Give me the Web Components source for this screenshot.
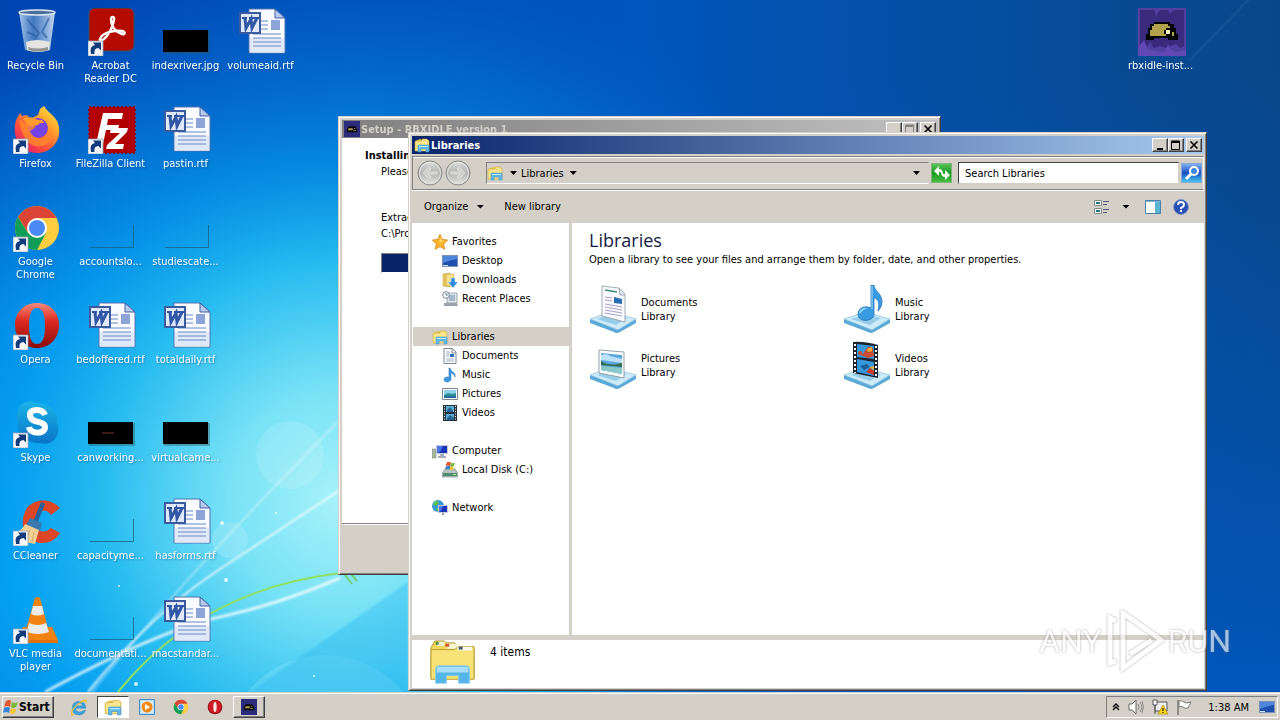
<!DOCTYPE html>
<html lang="en">
<head>
<meta charset="utf-8">
<title>Desktop</title>
<style>
  :root {
    --face: #d4d0c8;
    --ui: "DejaVu Sans Condensed", "DejaVu Sans", sans-serif;
  }
  html, body { height: 100%; margin: 0; }
  body { font: 11px/13px var(--ui); color: #000; overflow: hidden; }
</style>
</head>
<body>
<desk-shell></desk-shell>

<script>
// ---------- icons ----------
const arrow = `<path d="M0 33h15v15H0z" fill="#f4f6f9" stroke="#9aa5b5" stroke-width=".8"/><path d="M3 46q-2-8 4-9l-2-2.500h8v8l-2.500-2.500q-5 0-4 6z" fill="#123c7c"/>`;
const base = `<path d="M1 34L28 43l19-9v4L31 47q-3 2-6 0L1 38z" fill="#5aa9d6"/><path d="M1 34L22 27l25 7-18 11z" fill="#cdeaf8" stroke="#86c1e0" stroke-width=".7"/><path d="M8 34l15-5 15 4-11 7z" fill="#98cde9"/>`;
const libFront = `<path d="M1 4l5-2 2 1h7v11H1z" fill="#e9c44c"/><path d="M2 4h6V2h5l2 2v10H1V5z" fill="#f8e48b" stroke="#caa437" stroke-width=".6"/><path d="M4 15V9q0-1 1-1h9q1 0 1 1v6h-3v-3H7v3z" fill="#5cb8ea" stroke="#3c91c8" stroke-width=".5"/><path d="M5 9h9v1H5z" fill="#c6ecfb"/>`;
const helmet = `<path d="M0 0h24v24H0z" fill="#5140a0"/><path d="M1 1h7l1 3 2-3h4l1 2 2-2h5v18l-2 1-2-2-3 1-1-1-1 2-3-1-3 1-2-3-2 3-3-2z" fill="#392a7c"/><path d="M0 20l3-4 2 5 8 1 2-3 3 3 6-1v3H0z" fill="#6248b4"/><path d="M8 7h8v1h2v2h1v3h1v3h-5v-1H8v1H4v-3h1v-3h1V8h2z" fill="#000"/><path d="M8 8h7v1h1v1h-2v1h-1v2h1v1H6v-3h1V9h1z" fill="#b3a14c"/><path d="M14 11h2v2h-2z" fill="#f6edc4"/><path d="M17 12h1v2h-1z" fill="#b3a14c"/>`;
const chrome = `<circle cx="24" cy="24" r="22" fill="#ffcd40"/><path d="M5 13l10.500 16L24 14h19.600A22 22 0 0 0 5 13z" fill="#db4437"/><path d="M15 29L5 13a22 22 0 0 0 19 33l9-17z" fill="#0f9d58"/><circle cx="24" cy="24" r="10" fill="#fff"/><circle cx="24" cy="24" r="8" fill="#4a8af4"/>`;
const opera = `<defs><linearGradient id="op" x2="0" y2="1"><stop stop-color="#f88a7c"/><stop offset=".4" stop-color="#dc2a20"/><stop offset="1" stop-color="#8c0b08"/></linearGradient></defs><path fill-rule="evenodd" d="M24 1C11 1 2 10 2 23s9 23 22 23 22-10 22-23S37 1 24 1zm0 5c6 0 8 7 8 18s-2 18-8 18-8-7-8-18 2-18 8-18z" fill="url(#op)"/>`;
const note = `<path d="M8 1c1 4 6 4 5 9-1-3-3-4-4-4v6c0 2-2 3-4 3s-3-1-3-2.500 2-3 5-2.300V1z" fill="#3c9be0" stroke="#1e6cb4" stroke-width=".5"/>`;
const monitor = `<path d="M0 2h16v12H0z" fill="#7c92b4"/><path d="M1 3h14v10H1z" fill="#1f4fae"/><path d="M1 3h14v3Q8 7 1 10z" fill="#4d86dc"/><path d="M1 12h5v1H1z" fill="#cde4f8"/>`;
const pc = `<path d="M0 6h4v9H0z" fill="#a8b6a0" stroke="#708070" stroke-width=".5"/><path d="M4 2h12v9H4z" fill="#c5cbd8"/><path d="M5 3h10v7H5z" fill="#1733b8"/><path d="M5 3h6L8 9 5 10z" fill="#4c75ec"/><path d="M8 11h4v2h2v2H6v-2h2z" fill="#a6adba"/>`;
const flagLogo = `<path d="M3 2q4-2 5 0L7 8Q4 6 1 8z" fill="#e5562c"/><path d="M9 3q3 2 6 0l-2 5q-3 2-5 0z" fill="#76b83c"/><path d="M1 9q3-2 6 0l-1 5q-3-2-6 0z" fill="#3685d8"/><path d="M8 9q3 2 5 1l-1 4q-3 2-5 0z" fill="#f8c42c"/>`;

const ICONS = {
  bin: [48, `<defs><linearGradient id="b"><stop stop-color="#d3e5f4" stop-opacity=".8"/><stop offset=".4" stop-color="#6d9cd0" stop-opacity=".6"/><stop offset="1" stop-color="#dbe8f4" stop-opacity=".9"/></linearGradient></defs><path d="M6 4h36l-5 38q-13 4-25 0z" fill="url(#b)"/><path d="M13 34q11-4 24 0l-1 8q-11 4-22 0z" fill="#e4e4e0"/><path d="M15 39q9 3 20 0v3q-10 3-19 0z" fill="#92928f"/><ellipse cx="24" cy="4.500" rx="18" ry="2.500" fill="#496f9f" stroke="#dde6ee" stroke-width="1.500"/><path d="M14 11l12 14-4 6M36 10l-7 14 5 6M14 24l9 4" stroke="#2a5c9a" stroke-width="2" fill="none" opacity=".6"/>`],
  acrobat: [48, `<rect x="1" width="45" height="43" rx="6" fill="#b30b00" stroke="#35506e" stroke-width="1"/><path d="M12 31c2-6 12-9 22-8 4 1 3 4 0 3-7-2-11-8-11-15 0-3 4-3 3 1-1 7-6 16-10 19-3 2-5 2-4 0z" fill="none" stroke="#fff" stroke-width="2.400"/>` + arrow],
  firefox: [48, `<defs><linearGradient id="f" x1="1" x2=".2" y2="1"><stop stop-color="#fff44f"/><stop offset=".35" stop-color="#ffa72a"/><stop offset=".7" stop-color="#ff4f3c"/><stop offset="1" stop-color="#e01870"/></linearGradient></defs><path d="M3 14l4-7 2 3 5-1 3 4 8-4 2-6 4-3c4 7 9 8 13 15 7 15-3 32-20 32C7 47-2 31 3 14z" fill="url(#f)"/><circle cx="25" cy="22" r="10" fill="#7542e5"/><path d="M6 14q9 6 17 2 1 6-6 9 3 8 11 7 10-1 9-13 6 15-7 21-19 4-24-26z" fill="#ff8a2c" opacity=".8"/><path d="M10 13q8-4 15 1 5-1 6 3-4-1-6 2l-8 1z" fill="#ff9c2c"/>` + arrow],
  filezilla: [48, `<path d="M1 1h46v46H1z" fill="#b20000" stroke="#8c0c16" stroke-width="2" stroke-dasharray="2 2"/><path d="M15 7h20l-1 6H20l-1 6h12l-1 5H18l-3 14H8z" fill="#fff"/><path d="M23 22h17l-1 4-12 12h9l-1 5H18l1-4 13-12H22z" fill="#fff"/>` + arrow],
  chrome: [48, chrome + arrow],
  opera: [48, opera + arrow],
  skype: [48, `<defs><linearGradient id="s" x2="0" y2="1"><stop stop-color="#1ab4e8"/><stop offset="1" stop-color="#0a74c8"/></linearGradient></defs><path d="M14 2c4-2 8 0 10 1 14 0 21 9 20 20 5 12-5 24-17 20C12 43 3 34 5 23 1 13 6 3 14 2z" fill="url(#s)"/><path d="M32 15q-2-5-8-5-7 0-7 5c0 9 15 5 15 12 0 8-15 7-16 0" fill="none" stroke="#fff" stroke-width="6"/>` + arrow],
  ccleaner: [48, `<path d="M47 10C38 0 22 0 14 10 5 24 11 43 27 45q13 1 20-10l-9-5q-6 6-12 2c-7-5-5-15 2-19q6-2 10 4z" fill="#dc4526"/><path d="M28 4l4 2-8 20-4-2z" fill="#26639c"/><path d="M17 20l12 5-2 8-14-6z" fill="#3a78ae"/><path d="M12 26l14 6-4 14-21-4 1-8q7-1 10-8z" fill="#f3cf93"/><path d="M17 32l-4 10M21 34l-2 10" stroke="#d7a868"/>` + arrow],
  vlc: [48, `<path d="M10 31h29l6 13H6z" fill="#f08214"/><path d="M6 44h39v3H6z" fill="#e0700a"/><path d="M22 2q2-2 5 0l10 38q-13 7-26 0z" fill="#f38310"/><path d="M20 10h9l2 8q-7 3-13 0zM16 27q9 4 17 0l3 9q-11 4-22 0z" fill="#ececec"/>` + arrow],
  word: [48, `<path d="M11 1h26l10 9v35H11z" fill="#f8fbff" stroke="#5273af"/><path d="M12 30h34v15H12z" fill="#d5e1f6" opacity=".7"/><path d="M37 1v9h10z" fill="#b8cbed" stroke="#3c5fa4"/><path d="M15 13h15M15 17h15M15 21h15M15 26h28M15 30h28M15 34h28M15 38h28" stroke="#6c88c4"/><path d="M33 12h9v10h-9z" fill="#8ca4d8"/><path d="M2 5h20v20H2z" fill="#dfe9fa" stroke="#3b5ba0" stroke-width="2"/><path d="M4 10h5M11 10h5M16 10h5" stroke="#3056a4" stroke-width="2"/><path d="M7 10l1 10 5-9 1 9 5-10" fill="none" stroke="#3056a4" stroke-width="3"/>`],
  black: [48, `<path d="M1 23h46v23H1z" fill="#355" opacity=".4"/><path d="M0 22h45v22H0z"/>`],
  blackline: [48, `<path d="M1 23h46v23H1z" fill="#355" opacity=".4"/><path d="M0 22h45v22H0z"/><path d="M14 33h12" stroke="#753b2c"/>`],
  ghost: [48, `<path d="M45.500 21v22.500H2" fill="none" stroke="#185f80" stroke-opacity=".75"/>`],
  rbx: [24, helmet],
  app: [24, `<path d="M0 0h24v24H0z" fill="#2d2c7c"/><path d="M7 8h10l3 5v4H4v-4z" fill="#080808"/><path d="M7 11h6v3H6zM15 11h2v1h-2zM14 14h4v1h-4z" fill="#b3a14c"/>`],
  lib: [16, libFront],
  libbig: [48, `<path d="M3 3h17v4H3z" fill="#d4b63c"/><path d="M5 1h10l2 2h9l3 4h16l1 3v30H1V8z" fill="#efd75d" stroke="#b99b32"/><path d="M7 2h8v4H7z" fill="#eff1df"/><path d="M6 2h3v3H6z" fill="#4a8c3b"/><path d="M17 4h12l3 5H18z" fill="#fff6d4"/><path d="M16 4h4v3h-4z" fill="#d65334"/><path d="M1 10h25l3-3h17v34H1z" fill="#f6e277" stroke="#b99b32"/><path d="M29 7h15v4H29z" fill="#f9faf0"/><path d="M30 7h4v3h-4z" fill="#456"/><path d="M6 45V30q0-3 3-3h29q3 0 3 3v15H30v-8H17v8z" fill="#54b5e8" stroke="#7cc6ee"/><path d="M7 28h33v6H7z" fill="#bce7f8" opacity=".8"/>`],
  star: [16, `<path d="M8 .500l2.300 4.900 5.400.7-4 3.700 1 5.500L8 12.600l-4.700 2.700 1-5.500-4-3.700 5.400-.7z" fill="#fbb62c" stroke="#d98413" stroke-width=".8"/><path d="M8 3l1.400 3.500 3 .5-5 1z" fill="#ffe37e"/>`],
  desktop: [16, monitor],
  downloads: [16, `<path d="M1 2l7-1v14l-7-1z" fill="#e9c65a" stroke="#c09a34" stroke-width=".5"/><path d="M4 2h8v12H4z" fill="#f6df8c" stroke="#c09a34" stroke-width=".5"/><path d="M9 6h4v4h3l-5 6-5-6h3z" fill="#2d8ae0" stroke="#cfe6f9" stroke-width=".6"/>`],
  recent: [16, `<path d="M5 2h10v10H5z" fill="#dfe4ea" stroke="#7f8c99" stroke-width=".7"/><path d="M7 5h6M7 7h6M7 9h6" stroke="#688bb0"/><path d="M2 12h13l1 3H2z" fill="#9aa3ad"/><circle cx="4" cy="4" r="3.300" fill="#f4f7fa" stroke="#7f8c99"/><path d="M4 2v2h2" fill="none" stroke="#456" stroke-width=".7"/>`],
  doc: [16, `<path d="M2 .500h8.500L14 4v11.500H2z" fill="#fbfcfe" stroke="#7c8797"/><path d="M10 1v4h4" fill="none" stroke="#7c8797"/><path d="M4 4h4M4 6h4M4 8h3M4 11h8M4 13h8" stroke="#8fa1b8" stroke-width=".8"/><path d="M8 6h4v3H8z" fill="#2d70b8"/>`],
  note: [16, note],
  pic: [16, `<path d="M.500 2.500h15v11H.500z" fill="#fff" stroke="#7d8792"/><path d="M2 4h12v8H2z" fill="#8ad0ea"/><path d="M2 9l4-2 4 1 4-1v5H2z" fill="#2d8f8f"/><path d="M2 10h12v2H2z" fill="#226aa0"/>`],
  film: [16, `<path d="M1 0h14v16H1z" fill="#22303c"/><path d="M4 1h8v6H4zM4 9h8v6H4z" fill="#5caed8"/><path d="M5 5l3-3 3 4v1H5zM5 13l3-3 4 3v2H5z" fill="#266494"/><path d="M2.500 1v15M13.500 1v15" stroke="#fff" stroke-dasharray="1 1.500"/>`],
  computer: [16, pc],
  disk: [16, `<g transform="translate(3 -1) scale(.65)">${flagLogo}</g><path d="M3 7h10l3 4v4H0v-4z" fill="#b9c3c0" stroke="#758280" stroke-width=".6"/><path d="M1 11h14v3H1z" fill="#4f8c6e"/><path d="M11 12h3v1h-3z" fill="#aef09c"/><g transform="translate(4 -1) scale(.6)">${flagLogo}</g>`],
  network: [16, `<circle cx="6" cy="6" r="6" fill="#3498d8"/><path d="M2 2q4-3 5 1L4 6 1 5zM3 8l4 1-1 3z" fill="#5fc05e"/><path d="M6 5h10v8H6z" fill="#c5cbd8"/><path d="M7 6h8v6H7z" fill="#1733b8"/><path d="M7 6h4l-2 5-2 1z" fill="#4c75ec"/><path d="M10 13h2v2h-2z" fill="#89a"/>`],
  libdoc: [48, base + `<path d="M13 1l17 2 6 6v28L13 31z" fill="#f9fafc" stroke="#8c98a6" stroke-width=".8"/><path d="M30 3l1 7h5" fill="#dde6ee" stroke="#8c98a6" stroke-width=".8"/><path d="M16 5l12 2" stroke="#3f8a78" stroke-width="1.500"/><path d="M16 12l7 1M16 15l7 1M16 19l17 3M16 22l17 3M16 25l17 3M16 28l17 3" stroke="#a8a0c8"/><path d="M25 12l8 2v5l-8-1z" fill="#276fb0"/>`],
  libmusic: [48, base + `<path d="M28 0h3c0 6 8 8 8 17q0 5-4 9c2-9 0-12-4-13v16c0 8-16 9-16 0 0-6 7-9 13-6z" fill="#3a9be2" stroke="#2473b7" stroke-width=".8"/><path d="M16 27q3-5 9-4-5 1-8 6z" fill="#92d4f8"/><path d="M29 1v23" stroke="#a6dcf7"/>`],
  libpic: [48, base + `<path d="M10 9l25 2v26L10 32z" fill="#fcfdfe" stroke="#93a0ac"/><path d="M12 12l21 2v19l-21-4z" fill="#5aa8df"/><path d="M12 14q7-2 9 1l12 3v4l-21-3z" fill="#bde2f8"/><path d="M12 20q8 6 21 2v4l-21-2z" fill="#376b4b"/><path d="M12 25l21 2v6l-21-4z" fill="#89c9ca"/>`],
  libvideo: [48, base + `<path d="M10 1q10-1 25 3v33L10 32z" fill="#1c2430"/><path d="M14 3l17 2v13l-17-2zM14 18l17 3v14l-17-4z" fill="#3898dc"/><path d="M15 13q0-3 3-3l2 3 4-6q4-3 6 1l1 7-6 2z" fill="#c94c33"/><path d="M23 31l4-4 4 3v4z" fill="#cf3926"/><path d="M24 8l5-2v4l-4 1zM26 26l5-1v4z" fill="#e8b534"/><path d="M17 25l7-2 3 3-6 3z" fill="#1c5f9b"/><path d="M12 3v29M33 5v31" stroke="#fff" stroke-width="2" stroke-dasharray="2 2"/>`],
  back: [26, `<defs><linearGradient id="n" x2="0" y2="1"><stop stop-color="#deded c"/><stop stop-color="#dededc"/><stop offset=".5" stop-color="#b4b4b2"/><stop offset="1" stop-color="#e4e4e2"/></linearGradient></defs><circle cx="13" cy="13" r="12" fill="url(#n)" stroke="#888"/><circle cx="13" cy="13" r="10.500" fill="none" stroke="#e4e4e2"/><path d="M6 13l6-6 2 2-3 3h9v2h-9l3 3-2 2z" fill="#d0d0ce" stroke="#dcdcda"/>`],
  go: [16, `<path d="M0 6l5-5v3q4 0 4 5Q8 7 5 7v4zM16 10l-5 5v-3q-4 0-4-5 1 2 4 2V5z" fill="#f4fff0"/>`],
  lens: [16, `<circle cx="10" cy="6" r="4" fill="#3f86dc" stroke="#fff" stroke-width="2"/><path d="M7 9l-5 5" stroke="#fff" stroke-width="3"/>`],
  view: [16, `<path d="M.500 1.500h7v5h-7zM.500 9.500h7v5h-7z" fill="#fff" stroke="#7f8b86"/><path d="M2 4h4M2 12h4" stroke="#287078" stroke-width="2"/><path d="M9 2.500h6M9 5.500h4M9 10.500h6M9 13.500h4" stroke="#557"/>`],
  pane: [16, `<path d="M.500 1.500h15v13H.500z" fill="#fff" stroke="#4b80a8"/><path d="M10 3h5v11h-5z" fill="#59b7d3"/><path d="M1 2h14v1H1z" fill="#83b5d8"/>`],
  help: [16, `<circle cx="8" cy="8" r="7.500" fill="#2850b4" stroke="#8b9dc8"/><path d="M5 6q0-3 3-3t3 3q0 1.500-3 3v1" fill="none" stroke="#fff" stroke-width="2"/><path d="M7 11h2v2H7z" fill="#fff"/>`],
  win: [16, flagLogo],
  ie: [16, `<path d="M14 9H5q0 3 3 3.500 3 0 4-1.500h2q-2 4-6 4-6 0-6-6t6-6q6 0 6 6zM5 7h6q0-2.500-3-2.500T5 7z" fill="#3aa4e4" stroke="#2379b8" stroke-width=".4"/><path d="M1 15q-1-5 6-10 6-5 8-3 1 1-1 3 1-2-1-2-3 0-7 4-5 5-4 7 1 1 3 0-3 3-4 1z" fill="#f0c030"/>`],
  wmp: [16, `<path d="M.500.500h15v15H.500z" fill="#b9dcf3" stroke="#438cc6"/><path d="M2 2h12v12H2z" fill="#d9eefb"/><circle cx="8" cy="8" r="5.500" fill="#f38b14"/><path d="M6 5l5 3-5 3z" fill="#fff"/>`],
  chromesm: [48, chrome],
  operasm: [48, `<circle cx="24" cy="24" r="22" fill="#9c0f18"/><circle cx="24" cy="23" r="19" fill="#cf1c26"/><ellipse cx="24" cy="24" rx="5" ry="15" fill="#f6e8e6"/>`],
  chev: [8, `<path d="M1 4l3-3 3 3M1 7l3-3 3 3" fill="none" stroke="#000" stroke-width="1.300"/>`],
  sound: [16, `<path d="M1 5h3l4-4v14l-4-4H1z" fill="#fff" stroke="#666"/><path d="M10 5q2 3 0 6M12 3q3.500 5 0 10M14 2q3 6 0 12" fill="none" stroke="#888"/>`],
  net: [16, `<path d="M3 3h12v9H3z" fill="#eee" stroke="#555"/><path d="M1 1h4v5H1zM3 6v9" fill="#fff" stroke="#555"/><path d="M11 6l5 9H6z" fill="#fbd51c" stroke="#aa8300" stroke-width=".6"/><path d="M11 9v3M11 13v1" stroke="#000"/>`],
  flag: [16, `<path d="M2 1v15" stroke="#777" stroke-width="1.500"/><path d="M3 2q3-1 5 1 2 2 7 0-2 4-3 6-3 1-5-1-2-1-4 0z" fill="#fff" stroke="#777"/>`]
};

class PixIcon extends HTMLElement {
  static get observedAttributes() { return ['name', 'size']; }
  constructor() { super(); this.attachShadow({ mode: 'open' }); }
  connectedCallback() { this.render(); }
  attributeChangedCallback() { this.render(); }
  render() {
    const [box, body] = ICONS[this.getAttribute('name')] || [16, ''];
    const size = this.getAttribute('size') || 16;
    this.shadowRoot.innerHTML = `
      <style>:host { display: block; flex: none; line-height: 0; }</style>
      <svg width="${size}" height="${size}" viewBox="0 0 ${box} ${box}" aria-hidden="true">${body}</svg>`;
  }
}

// small helper: class with a fixed shadow markup
function define(tag, html) {
  customElements.define(tag, class extends HTMLElement {
    constructor() { super(); this.attachShadow({ mode: 'open' }); }
    connectedCallback() {
      this.shadowRoot.innerHTML = typeof html === 'function' ? html(this) : html;
    }
  });
}
customElements.define('pix-icon', PixIcon);

// ---------- desktop ----------
define('desk-wallpaper', `
  <style>
    :host { display: block; position: absolute; inset: 0; }
    svg { display: block; width: 100%; height: 100%; }
  </style>
  <svg viewBox="0 0 1280 692" preserveAspectRatio="xMidYMid slice" aria-hidden="true">
    <defs>
      <linearGradient id="sky" x2="1" y2="0">
        <stop stop-color="#0044b0"/><stop offset=".5" stop-color="#0056bc"/><stop offset="1" stop-color="#0a4788"/>
      </linearGradient>
      <linearGradient id="low" x2="0" y2="1">
        <stop offset=".1" stop-color="#0054b8" stop-opacity="0"/><stop offset="1" stop-color="#0058c0" stop-opacity=".9"/>
      </linearGradient>
      <radialGradient id="left" gradientUnits="userSpaceOnUse" cx="0" cy="600" r="560">
        <stop stop-color="#00a4fa"/><stop offset=".5" stop-color="#0092f0" stop-opacity=".9"/><stop offset="1" stop-color="#0070d8" stop-opacity="0"/>
      </radialGradient>
      <radialGradient id="glow" gradientUnits="userSpaceOnUse" cx="340" cy="500" r="560">
        <stop stop-color="#a8f2fa"/><stop offset=".2" stop-color="#78e2f6"/><stop offset=".42" stop-color="#28bcf0"/>
        <stop offset=".6" stop-color="#06a0f0" stop-opacity=".7"/><stop offset=".85" stop-color="#0470d4" stop-opacity=".4"/><stop offset="1" stop-color="#0458c0" stop-opacity="0"/>
      </radialGradient>
      <filter id="soft"><feGaussianBlur stdDeviation="1"/></filter>
    </defs>
    <path d="M0 0h1280v692H0z" fill="url(#sky)"/>
    <path d="M0 0h1280v692H0z" fill="url(#low)"/>
    <path d="M0 0h1280v692H0z" fill="url(#left)"/>
    <path d="M0 0h1280v692H0z" fill="url(#glow)"/>
    <circle cx="325" cy="755" r="100" fill="#a0ecfc" opacity=".25"/>
    <circle cx="290" cy="455" r="34" fill="#fff" opacity=".12"/>
    <circle cx="230" cy="540" r="18" fill="#fff" opacity=".15"/>
    <path d="M250 692h158v-110z" fill="#20b4f0" opacity=".35" filter="url(#soft)"/>
    <g fill="none" stroke="#fff" filter="url(#soft)">
      <path d="M45 692Q160 630 220 617T340 578" stroke-width="3" opacity=".75"/>
      <path d="M88 692Q150 615 220 569T340 490" stroke-width="2" opacity=".8"/>
      <path d="M92 692Q190 570 340 420" stroke-width="2" opacity=".35"/>
      <path d="M1190 60L1250 -2" stroke="#6c98cc" opacity=".5"/>
    </g>
    <path d="M118 692Q200 590 340 573" fill="none" stroke="#8ee060" stroke-width="2"/>
    <path d="M345 575l7 9M351 574l6 7" stroke="#70d070" stroke-width="2"/>
    <g fill="#fff" opacity=".8">
      <circle cx="222" cy="523" r="2"/><circle cx="276" cy="513" r="1"/><circle cx="226" cy="580" r="2"/>
      <circle cx="136" cy="684" r="2"/><circle cx="119" cy="586" r="1"/><circle cx="314" cy="676" r="1"/>
    </g>
  </svg>`);

define('desk-icon', el => `
  <style>
    :host { display: block; min-width: 0; }
    button { all: unset; display: flex; flex-direction: column; align-items: center; gap: 3px; width: 100%; text-align: center; white-space: nowrap; color: #fff; text-shadow: 1px 1px 2px #0a3a7080; }
    pix-icon { margin-left: 2px; }
  </style>
  <button><pix-icon name="${el.getAttribute('icon')}" size="48"></pix-icon><span><slot></slot></span></button>`);

// ---------- windows ----------
define('caption-buttons', `
  <style>
    :host { display: flex; margin-left: auto; }
    button { box-sizing: border-box; width: 16px; height: 14px; padding: 0; background: var(--face); border: 1px solid; border-color: #fff #404040 #404040 #fff; box-shadow: inset -1px -1px #808080; }
    button:last-child { margin-left: 2px; }
    svg { display: block; margin: auto; }
  </style>
  <button aria-label="Minimize"><svg width="12" height="11"><path d="M3 8h6v2H3z"/></svg></button>
  <button aria-label="Maximize"><svg width="12" height="11"><path d="M1.500 1v8.500h8V1z" fill="none" stroke="var(--max, #000)"/><path d="M1 1h9v2H1z" fill="var(--max, #000)"/></svg></button>
  <button aria-label="Close"><svg width="12" height="11"><path d="M2.500 1.500l7 7m0-7l-7 7" stroke="#000" stroke-width="1.600"/></svg></button>`);

define('desk-window', el => `
  <style>
    :host { display: flex; flex-direction: column; box-sizing: border-box; padding: 3px 2px 2px 3px; background: var(--face); border: 1px solid; border-color: var(--face) #404040 #404040 var(--face); box-shadow: inset 1px 1px #fff, inset -1px -1px #808080; }
    header { display: flex; align-items: center; gap: 1px; box-sizing: border-box; flex: none; height: 18px; padding: 0 2px; color: #fff; background: linear-gradient(90deg, #0a246a, #a6caf0); }
    :host([inactive]) header { --max: #808080; color: #d4d0c8; background: linear-gradient(90deg, #808080, #c0c0c0); }
    h1 { margin: 0; font-size: 11px; line-height: 13px; font-weight: bold; }
    main { display: flex; flex-direction: column; flex: 1; min-height: 0; }
  </style>
  <header><pix-icon name="${el.getAttribute('icon')}" size="16"></pix-icon><h1>${el.getAttribute('caption')}</h1><caption-buttons></caption-buttons></header>
  <main><slot></slot></main>`);

define('setup-page', `
  <style>
    :host { display: flex; flex-direction: column; flex: 1; }
    section { flex: 1; padding: 11px 39px 0; background: #fff; }
    h2 { margin: 0 0 3px -16px; font-size: 11px; line-height: 13px; }
    p { margin: 0 0 3px; line-height: 13px; }
    p.file { margin-top: 33px; }
    .bar { height: 18px; margin-top: 13px; border: 1px solid; border-color: #808080 #fff #fff #808080; background: linear-gradient(90deg, #0a246a 40%, #fff 40%); }
    footer { height: 48px; border-top: 1px solid #808080; box-shadow: inset 0 1px #fff; }
  </style>
  <section>
    <h2>Installing</h2>
    <p>Please wait</p>
    <p class="file">Extracting files...</p>
    <p>C:\\Program Files</p>
    <div class="bar" role="progressbar" aria-label="Install progress"></div>
  </section>
  <footer></footer>`);

define('address-bar', `
  <style>
    :host { display: flex; align-items: center; gap: 2px; box-sizing: border-box; height: 34px; margin-top: 2px; padding: 0 1px 0 4px; border: 1px solid; border-color: #808080 #fff #808080 #808080; box-shadow: inset 0 1px #fff, 0 1px #fff; }
    button { all: unset; box-sizing: border-box; flex: none; }
    .flip { transform: scaleX(-1); }
    .crumbs { display: flex; align-items: center; flex: 1; box-sizing: border-box; height: 22px; margin-left: 13px; padding: 0 8px 0 0; border: 1px solid; border-color: #808080 var(--face) #fff #808080; }
    .crumbs a { color: #000; text-decoration: none; margin: 0 6px 0 4px; }
    .tri { width: 7px; height: 4px; background: #000; clip-path: polygon(0 0, 100% 0, 50% 100%); }
    .first { margin-left: 7px; }
    .last { margin-left: auto; }
    .go, .find { display: grid; place-items: center; width: 21px; height: 20px; border: 1px solid #7fb47c; background: linear-gradient(#58c458, #159a22 50%, #46bd40); }
    .find { border-color: #88a8dc; background: linear-gradient(#7db0f0, #174fc4 50%, #48c4f0); }
    input { box-sizing: border-box; width: 221px; height: 22px; margin: 0 0 0 4px; padding: 0 6px; font: inherit; color: #000; background: #fff; border: 1px solid; border-color: #404040 #d4d0c8 #d4d0c8 #404040; border-radius: 0; }
    input::placeholder { color: #000; opacity: 1; }
  </style>
  <button aria-label="Back"><pix-icon name="back" size="26"></pix-icon></button>
  <button aria-label="Forward" class="flip"><pix-icon name="back" size="26"></pix-icon></button>
  <div class="crumbs">
    <pix-icon name="lib"></pix-icon>
    <i class="tri first"></i><a href="#">Libraries</a><i class="tri"></i>
    <button class="tri last" aria-label="Previous locations"></button>
  </div>
  <button class="go" aria-label="Refresh"><pix-icon name="go"></pix-icon></button>
  <input type="search" aria-label="Search Libraries" placeholder="Search Libraries">
  <button class="find" aria-label="Search"><pix-icon name="lens"></pix-icon></button>`);

define('command-bar', `
  <style>
    :host { display: flex; align-items: center; flex: none; height: 33px; padding: 0 15px 0 12px; }
    button { all: unset; display: flex; align-items: center; gap: 8px; margin-right: 20px; }
    button.icon { margin: 0 0 0 12px; }
    button.push { margin-left: auto; }
    button.wide { margin-left: 15px; }
    i { width: 8px; height: 4px; background: #000; clip-path: polygon(0 0, 100% 0, 50% 100%); }
  </style>
  <button>Organize<i></i></button>
  <button>New library</button>
  <button class="icon push" aria-label="Change your view"><pix-icon name="view"></pix-icon></button>
  <button class="icon" aria-label="More options"><i></i></button>
  <button class="icon wide" aria-label="Preview pane"><pix-icon name="pane"></pix-icon></button>
  <button class="icon" aria-label="Help"><pix-icon name="help"></pix-icon></button>`);

define('nav-item', el => `
  <style>
    :host { display: block; }
    a { display: flex; align-items: center; gap: 4px; height: 19px; padding-left: 19px; color: #000; text-decoration: none; }
    :host([sub]) a { padding-left: 29px; }
    :host([selected]) a { background: var(--face); }
  </style>
  <a href="#"><pix-icon name="${el.getAttribute('icon')}"></pix-icon><slot></slot></a>`);

define('library-tile', el => `
  <style>
    :host { display: block; }
    a { display: flex; align-items: center; gap: 4px; height: 48px; line-height: 14px; color: #000; text-decoration: none; }
    span { display: block; margin-top: 2px; }
  </style>
  <a href="#"><pix-icon name="${el.getAttribute('icon')}" size="48"></pix-icon><span><slot></slot><br>Library</span></a>`);

define('libraries-page', `
  <style>
    :host { display: flex; flex-direction: column; flex: 1; min-height: 0; }
    .body { display: flex; flex: 1; min-height: 0; background: #fff; }
    nav { box-sizing: border-box; width: 160px; padding: 9px 0 0 1px; border-right: 3px solid var(--face); }
    nav div { margin-bottom: 19px; }
    section { flex: 1; padding: 6px 17px; }
    h2 { margin: 0; font: 18px/22px "Open Sans", "Noto Sans", sans-serif; font-weight: 400; color: #111c44; }
    p { margin: 2px 0 18px; line-height: 14px; }
    .tiles { display: grid; grid-template-columns: repeat(auto-fill, 254px); row-gap: 8px; }
    footer { display: flex; gap: 14px; flex: none; height: 48px; padding-left: 18px; border-top: 5px solid var(--face); background: #fff; font-size: 12px; line-height: 24px; }
  </style>
  <address-bar></address-bar>
  <command-bar></command-bar>
  <div class="body">
    <nav aria-label="Places">
      <div>
        <nav-item icon="star">Favorites</nav-item>
        <nav-item icon="desktop" sub>Desktop</nav-item>
        <nav-item icon="downloads" sub>Downloads</nav-item>
        <nav-item icon="recent" sub>Recent Places</nav-item>
      </div>
      <div>
        <nav-item icon="lib" selected>Libraries</nav-item>
        <nav-item icon="doc" sub>Documents</nav-item>
        <nav-item icon="note" sub>Music</nav-item>
        <nav-item icon="pic" sub>Pictures</nav-item>
        <nav-item icon="film" sub>Videos</nav-item>
      </div>
      <div>
        <nav-item icon="computer">Computer</nav-item>
        <nav-item icon="disk" sub>Local Disk (C:)</nav-item>
      </div>
      <nav-item icon="network">Network</nav-item>
    </nav>
    <section>
      <h2>Libraries</h2>
      <p>Open a library to see your files and arrange them by folder, date, and other properties.</p>
      <div class="tiles">
        <library-tile icon="libdoc">Documents</library-tile>
        <library-tile icon="libmusic">Music</library-tile>
        <library-tile icon="libpic">Pictures</library-tile>
        <library-tile icon="libvideo">Videos</library-tile>
      </div>
    </section>
  </div>
  <footer><pix-icon name="libbig" size="46"></pix-icon>4 items</footer>`);

// ---------- taskbar ----------
define('task-bar', `
  <style>
    :host { display: flex; align-items: center; flex: none; box-sizing: border-box; height: 28px; padding: 3px 2px 1px; background: var(--face); box-shadow: inset 0 1px var(--face), inset 0 2px #fff; }
    button { all: unset; display: grid; place-items: center; box-sizing: border-box; width: 32px; height: 22px; margin-right: 2px; border: 1px solid transparent; }
    .up, .start { border-color: #fff #404040 #404040 #fff; box-shadow: inset -1px -1px #808080; }
    .down { border-color: #404040 #fff #fff #404040; background: #fff; }
    .start { display: flex; align-items: center; width: 52px; margin-right: 9px; font-size: 12px; font-weight: bold; }
    .tray { display: flex; align-items: center; gap: 8px; box-sizing: border-box; height: 22px; margin-left: auto; padding: 0 2px 0 5px; border: 1px solid; border-color: #808080 #fff #fff #808080; }
    time { margin: 0 2px 0 8px; }
  </style>
  <button class="start"><pix-icon name="win"></pix-icon>Start</button>
  <button aria-label="Internet Explorer"><pix-icon name="ie" size="18"></pix-icon></button>
  <button class="down" aria-label="Libraries"><pix-icon name="lib" size="18"></pix-icon></button>
  <button aria-label="Media Player"><pix-icon name="wmp"></pix-icon></button>
  <button aria-label="Google Chrome"><pix-icon name="chromesm"></pix-icon></button>
  <button aria-label="Opera"><pix-icon name="operasm"></pix-icon></button>
  <button class="up" aria-label="Setup"><pix-icon name="app"></pix-icon></button>
  <div class="tray">
    <pix-icon name="chev" size="8"></pix-icon>
    <pix-icon name="sound"></pix-icon>
    <pix-icon name="net"></pix-icon>
    <pix-icon name="flag"></pix-icon>
    <time>1:38 AM</time>
    <pix-icon name="desktop"></pix-icon>
  </div>`);

define('run-mark', `
  <style>
    :host { display: flex; align-items: center; gap: 4px; font: 32px/60px Roboto, sans-serif; color: #fff; opacity: .65; filter: drop-shadow(0 0 1px #777); pointer-events: none; }
  </style>
  <span>ANY</span>
  <svg width="58" height="62" fill="none" stroke="#fff" stroke-width="5" aria-hidden="true"><path d="M17 3l38 27-38 28zM10 11L4 8v45l6-2M17 14v32M24 44l22-14"/></svg>
  <span>RUN</span>`);

define('desk-shell', `
  <style>
    :host { display: flex; flex-direction: column; height: 100vh; }
    .desk { position: relative; flex: 1; min-height: 0; overflow: hidden; }
    .icons { position: relative; display: flex; justify-content: space-between; padding-top: 8px; }
    .grid { display: grid; grid-auto-flow: column; grid-template-rows: repeat(7, 98px); grid-auto-columns: 75px; margin-left: -2px; }
    .lone { width: 75px; margin-right: 82px; }
    desk-window { position: absolute; }
    .setup { left: 338px; top: 116px; width: 603px; height: 459px; }
    .explorer { left: 408px; top: 132px; width: 799px; height: 559px; }
    run-mark { position: absolute; right: 49px; bottom: 20px; }
  </style>
  <div class="desk">
    <desk-wallpaper></desk-wallpaper>
    <div class="icons">
      <div class="grid">
        <desk-icon icon="bin">Recycle Bin</desk-icon>
        <desk-icon icon="firefox">Firefox</desk-icon>
        <desk-icon icon="chrome">Google<br>Chrome</desk-icon>
        <desk-icon icon="opera">Opera</desk-icon>
        <desk-icon icon="skype">Skype</desk-icon>
        <desk-icon icon="ccleaner">CCleaner</desk-icon>
        <desk-icon icon="vlc">VLC media<br>player</desk-icon>
        <desk-icon icon="acrobat">Acrobat<br>Reader DC</desk-icon>
        <desk-icon icon="filezilla">FileZilla Client</desk-icon>
        <desk-icon icon="ghost">accountslo...</desk-icon>
        <desk-icon icon="word">bedoffered.rtf</desk-icon>
        <desk-icon icon="blackline">canworking...</desk-icon>
        <desk-icon icon="ghost">capacityme...</desk-icon>
        <desk-icon icon="ghost">documentati...</desk-icon>
        <desk-icon icon="black">indexriver.jpg</desk-icon>
        <desk-icon icon="word">pastin.rtf</desk-icon>
        <desk-icon icon="ghost">studiescate...</desk-icon>
        <desk-icon icon="word">totaldaily.rtf</desk-icon>
        <desk-icon icon="black">virtualcame...</desk-icon>
        <desk-icon icon="word">hasforms.rtf</desk-icon>
        <desk-icon icon="word">macstandar...</desk-icon>
        <desk-icon icon="word">volumeaid.rtf</desk-icon>
      </div>
      <desk-icon class="lone" icon="rbx">rbxidle-inst...</desk-icon>
    </div>
    <desk-window class="setup" icon="app" caption="Setup - RBXIDLE version 1" inactive><setup-page></setup-page></desk-window>
    <desk-window class="explorer" icon="lib" caption="Libraries"><libraries-page></libraries-page></desk-window>
    <run-mark></run-mark>
  </div>
  <task-bar></task-bar>`);
</script>
</body>
</html>
